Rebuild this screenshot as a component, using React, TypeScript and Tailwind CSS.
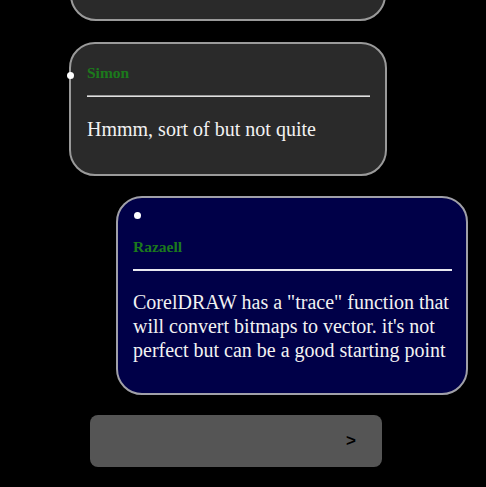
import React from 'react';

const serif = { fontFamily: '"Liberation Serif", "Times New Roman", serif' };

function Dot() {
  return <span className="block h-[7px] w-[7px] rounded-full bg-white" />;
}

export default function App() {
  return (
    <div className="h-[487px] w-[486px] overflow-hidden bg-black" style={serif}>
      {/* previous message, cut off at the top */}
      <div className="-mt-[60px] ml-[70px] h-[81px] w-[316px] rounded-[26px] border-2 border-[#9a9a9a] bg-[#2a2a2a]" />

      {/* Simon */}
      <div className="relative ml-[69px] mt-[21px] w-[318px] rounded-[26px] border-2 border-[#9a9a9a] bg-[#2a2a2a] pb-[33px] pl-[16px] pr-[15px] pt-[21px]">
        <span className="absolute left-[-4px] top-[28px]">
          <Dot />
        </span>
        <div className="text-[15.5px] font-bold leading-[16px] text-[#1c7a1c]">Simon</div>
        <div className="mt-[14px] h-[2px] border-t border-[#9a9a9a] bg-[#e0e0e0]" />
        <p className="mt-[20px] text-[20px] leading-[24px] text-[#f2f2f2]">Hmmm, sort of but not quite</p>
      </div>

      {/* Razaell */}
      <div className="ml-[116px] mt-[20px] w-[352px] rounded-[26px] border-2 border-[#a0a0a8] bg-[#000048] pb-[31px] pl-[15px] pr-[14px] pt-[14px]">
        <div className="ml-[1px]">
          <Dot />
        </div>
        <div className="mt-[20px] text-[15.5px] font-bold leading-[16px] text-[#1c7a1c]">Razaell</div>
        <div className="mt-[14px] h-[2px] bg-[#e8e8f0]" />
        <p className="mt-[19px] text-[20px] leading-[24px] text-[#f2f2f2]">
          CorelDRAW has a "trace" function that will convert bitmaps to vector. it's not perfect but can be a
          good starting point
        </p>
      </div>

      {/* input */}
      <div className="ml-[90px] mt-[20px] flex h-[52px] w-[292px] items-center justify-end rounded-[8px] bg-[#555555] pr-[26px]">
        <span
          className="text-[17px] font-bold text-black"
          style={{ fontFamily: '"Liberation Sans", Arial, sans-serif' }}
        >
          &gt;
        </span>
      </div>
    </div>
  );
}
